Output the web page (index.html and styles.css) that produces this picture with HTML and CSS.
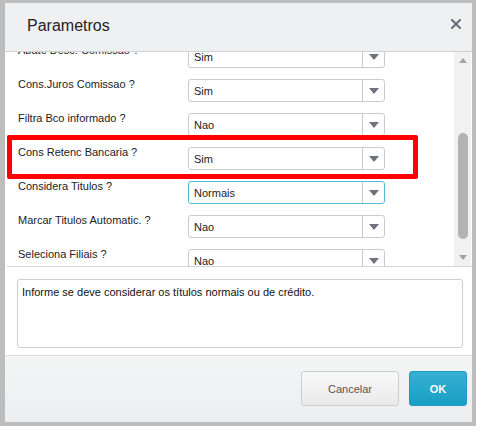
FILE: index.html
```html
<!DOCTYPE html>
<html lang="pt-br">
<head>
  <meta charset="UTF-8" />
  <title>Parametros</title>
  <link rel="stylesheet" href="styles.css">
</head>
<body>

  <div class="dialogo">
    <header class="cabecalho">
      <h1>Parametros</h1>
      <button class="fechar" title="Fechar">
        <svg width="10" height="10" viewBox="0 0 10 10">
          <path d="M1 1 L9 9 M9 1 L1 9" stroke="#666d78" stroke-width="2" stroke-linecap="square" fill="none"/>
        </svg>
      </button>
    </header>

    <main class="conteudo">
      <div class="painel">
        <div class="lista">
          <div class="linha">
            <label>Abate Desc. Comissao ?</label>
            <div class="combo"><span>Sim</span><i class="seta"></i></div>
          </div>
          <div class="linha">
            <label>Cons.Juros Comissao ?</label>
            <div class="combo"><span>Sim</span><i class="seta"></i></div>
          </div>
          <div class="linha">
            <label>Filtra Bco informado ?</label>
            <div class="combo"><span>Nao</span><i class="seta"></i></div>
          </div>
          <div class="linha">
            <label>Cons Retenc Bancaria ?</label>
            <div class="combo"><span>Sim</span><i class="seta"></i></div>
          </div>
          <div class="linha">
            <label>Considera Titulos ?</label>
            <div class="combo ativo"><span>Normais</span><i class="seta"></i></div>
          </div>
          <div class="linha">
            <label>Marcar Titulos Automatic. ?</label>
            <div class="combo"><span>Nao</span><i class="seta"></i></div>
          </div>
          <div class="linha">
            <label>Seleciona Filiais ?</label>
            <div class="combo"><span>Nao</span><i class="seta"></i></div>
          </div>
        </div>

        <div class="rolagem">
          <i class="rol-cima"></i>
          <div class="trilho"><div class="barra"></div></div>
          <i class="rol-baixo"></i>
        </div>
      </div>

      <div class="descricao">Informe se deve considerar os títulos normais ou de crédito.</div>
    </main>

    <footer class="rodape">
      <button class="btn-cancelar">Cancelar</button>
      <button class="btn-ok">OK</button>
    </footer>

    <div class="destaque"></div>
  </div>

</body>
</html>
```

FILE: styles.css
```css
* {
  box-sizing: border-box;
  font-family: 'Liberation Sans', Arial, sans-serif;
}

body {
  margin: 0;
  background: #fff;
  color: #222;
}

.dialogo {
  position: relative;
  width: 476px;
  height: 426px;
  border-style: solid;
  border-color: #bdbdbd;
  border-width: 3px 4px 4px 5px;
  display: flex;
  flex-direction: column;
  background: #fff;
}

/* cabecalho */
.cabecalho {
  height: 49px;
  background: #eff0f2;
  border-bottom: 1px solid #cfd2d5;
  display: flex;
  align-items: center;
  justify-content: space-between;
  padding: 0 10px 0 22px;
}

.cabecalho h1 {
  margin: 0;
  font-size: 16px;
  font-weight: normal;
  color: #222;
  padding-bottom: 3px;
}

.fechar {
  border: none;
  background: none;
  padding: 0;
  width: 12px;
  height: 12px;
  margin-bottom: 8px;
  cursor: pointer;
}

/* conteudo */
.conteudo {
  height: 303px;
  padding-left: 2px;
}

.painel {
  height: 215px;
  display: flex;
  border-bottom: 1px solid #d6d6d6;
  overflow: hidden;
}

.lista {
  flex: 1;
  margin-top: -10px;
}

.linha {
  height: 34px;
  display: flex;
  align-items: flex-start;
}

.linha label {
  width: 181px;
  padding-left: 11px;
  margin-top: 1px;
  line-height: 14px;
  font-size: 11px;
}

.combo {
  margin-top: 3px;
  width: 197px;
  height: 23px;
  border: 1px solid #cbcbcb;
  border-radius: 3px;
  background: #fff;
  display: flex;
  align-items: center;
  font-size: 11px;
}

.combo span {
  flex: 1;
  padding-left: 5px;
}

.combo.ativo {
  border-color: #55b9d8;
}

.seta {
  width: 22px;
  height: 100%;
  border-left: 1px solid #cbcbcb;
  display: flex;
  align-items: center;
  justify-content: center;
}

.seta::after {
  content: "";
  border-left: 5px solid transparent;
  border-right: 5px solid transparent;
  border-top: 6px solid #6c727c;
}

/* barra de rolagem */
.rolagem {
  width: 17px;
  margin-right: 1px;
  background: #f1f1f1;
  display: flex;
  flex-direction: column;
  align-items: center;
}

.rol-cima, .rol-baixo {
  height: 17px;
  display: flex;
  align-items: center;
  justify-content: center;
}

.rol-cima::after {
  content: "";
  border-left: 4px solid transparent;
  border-right: 4px solid transparent;
  border-bottom: 5px solid #a3a3a3;
}

.rol-baixo::after {
  content: "";
  border-left: 4px solid transparent;
  border-right: 4px solid transparent;
  border-top: 5px solid #a3a3a3;
}

.trilho {
  flex: 1;
  width: 100%;
  display: flex;
  justify-content: center;
}

.barra {
  margin-top: 64px;
  width: 10px;
  height: 106px;
  border-radius: 5px;
  background: #b3b3b3;
}

.descricao {
  margin: 12px 9px 0 10px;
  height: 69px;
  border: 1px solid #cfcfcf;
  border-radius: 3px;
  padding: 6px 4px;
  font-size: 11px;
  color: #111;
}

/* rodape */
.rodape {
  flex: 1;
  border-top: 1px solid #dcdcdc;
  background: linear-gradient(#f4f5f5, #eceef0);
  display: flex;
  justify-content: flex-end;
  align-items: flex-start;
  gap: 10px;
  padding: 15px 5px 0 0;
}

.rodape button {
  height: 35px;
  border-radius: 3px;
  font-size: 11px;
  cursor: pointer;
}

.btn-cancelar {
  width: 98px;
  border: 1px solid #cdcdcd;
  background: linear-gradient(#f9f9f9, #e9e9e9);
  color: #555;
}

.btn-ok {
  width: 58px;
  border: 1px solid #1b9cc0;
  background: linear-gradient(#36b0d2, #189fc4);
  color: #fff;
  font-weight: bold;
}

/* destaque vermelho */
.destaque {
  position: absolute;
  left: 2px;
  top: 132px;
  width: 411px;
  height: 44px;
  border: 5px solid #f00;
  border-radius: 2px;
  pointer-events: none;
}
```
